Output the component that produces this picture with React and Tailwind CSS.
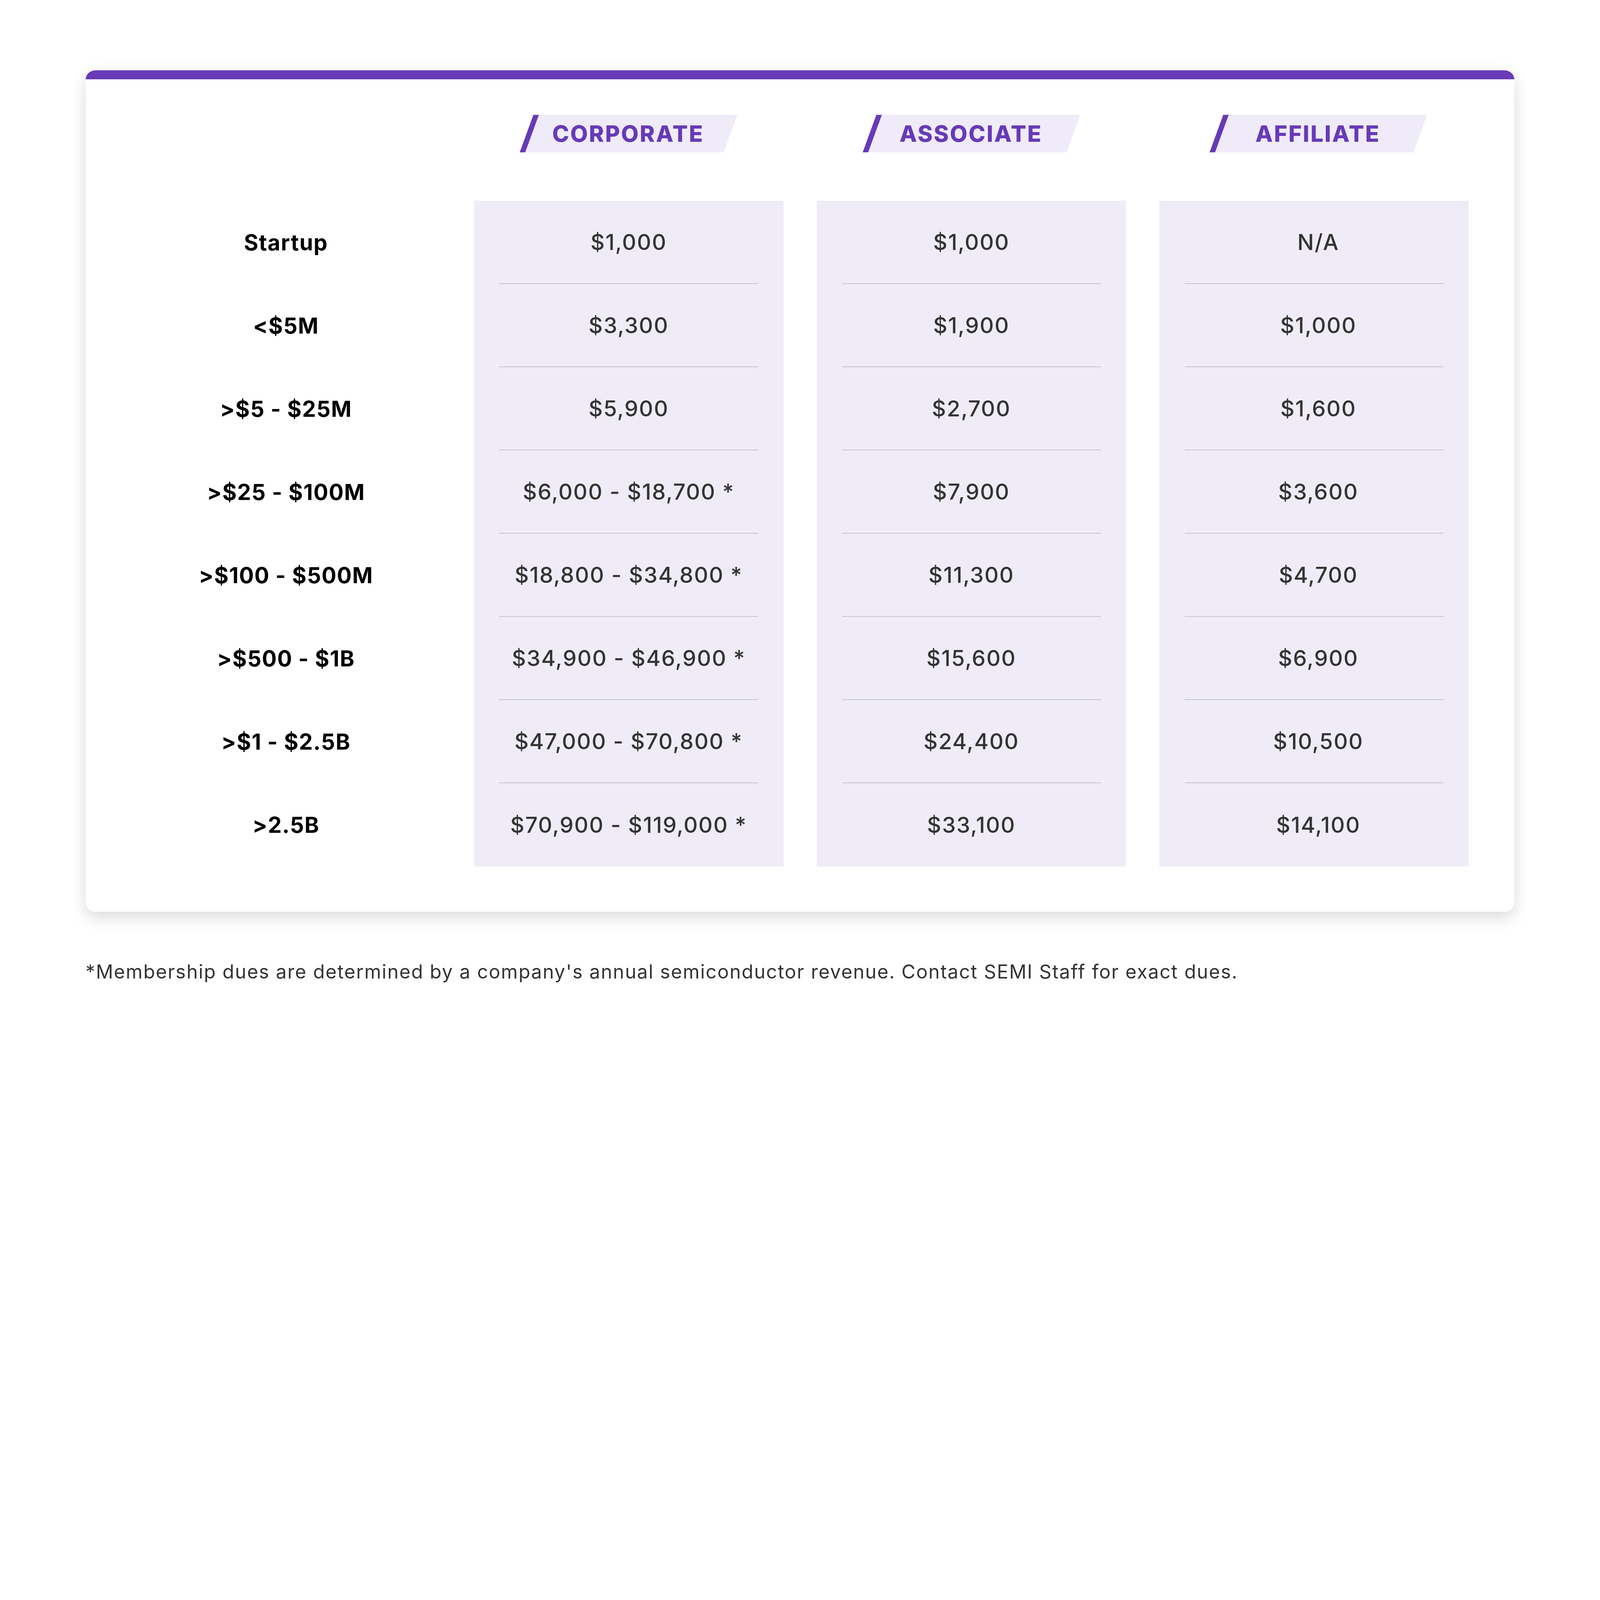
const tiers = [
  { label: "Startup", corporate: "$1,000", associate: "$1,000", affiliate: "N/A" },
  { label: "<$5M", corporate: "$3,300", associate: "$1,900", affiliate: "$1,000" },
  { label: ">$5 - $25M", corporate: "$5,900", associate: "$2,700", affiliate: "$1,600" },
  { label: ">$25 - $100M", corporate: "$6,000 - $18,700 *", associate: "$7,900", affiliate: "$3,600" },
  { label: ">$100 - $500M", corporate: "$18,800 - $34,800 *", associate: "$11,300", affiliate: "$4,700" },
  { label: ">$500 - $1B", corporate: "$34,900 - $46,900 *", associate: "$15,600", affiliate: "$6,900" },
  { label: ">$1 - $2.5B", corporate: "$47,000 - $70,800 *", associate: "$24,400", affiliate: "$10,500" },
  { label: ">2.5B", corporate: "$70,900 - $119,000 *", associate: "$33,100", affiliate: "$14,100" },
];

const columns = [
  { key: "corporate", title: "CORPORATE", shift: "" },
  { key: "associate", title: "ASSOCIATE", shift: "" },
  { key: "affiliate", title: "AFFILIATE", shift: "pl-[22px]" },
];

const Badge = ({ title, shift }) => (
  <div className={`flex justify-center ${shift}`}>
    <div className="flex h-[96px] w-[522px] -skew-x-20 items-center justify-center border-l-[14px] border-[#673ab7] bg-[#efebf9]">
      <span className="-ml-[16px] skew-x-20 text-[58px] font-extrabold tracking-[3px] text-[#673ab7]">
        {title}
      </span>
    </div>
  </div>
);

const App = () => {
  return (
    <div
      className="h-[2696px] overflow-hidden bg-white pt-[180px] text-[#333]"
      style={{ fontFamily: "Inter, 'Noto Sans', sans-serif" }}
    >
      <div className="mx-auto w-[3658px] overflow-hidden rounded-[25px] bg-white shadow-[0_14px_40px_rgba(0,0,0,0.15)]">
        <div className="h-[23px] bg-[#673ab7]" />
        <div className="grid grid-cols-4 gap-x-[85px] px-[117px] pt-[91px] pb-[116px]">
          <div />
          {columns.map((c) => (
            <Badge key={c.key} title={c.title} shift={c.shift} />
          ))}

          <div className="col-span-4 h-[124px]" />

          <div className="flex flex-col">
            {tiers.map((t) => (
              <div
                key={t.label}
                className="flex h-[213px] items-center justify-center text-[56px] font-bold tracking-[1.5px] text-black"
              >
                {t.label}
              </div>
            ))}
          </div>

          {columns.map((c) => (
            <div key={c.key} className="flex flex-col bg-[#efecf8] px-[65px]">
              {tiers.map((t, i) => (
                <div
                  key={t.label}
                  className={`flex h-[213px] items-center justify-center text-[56px] font-medium tracking-[2px] ${c.shift} ${
                    i < tiers.length - 1 ? "border-b-2 border-[#c5c3cc]" : ""
                  }`}
                >
                  {t[c.key]}
                </div>
              ))}
            </div>
          ))}
        </div>
      </div>
      <p className="mx-auto mt-[117px] w-[3658px] text-[49px] tracking-[1.9px] text-[#333]">
        *Membership dues are determined by a company's annual semiconductor revenue. Contact SEMI Staff for exact dues.
      </p>
    </div>
  );
};

export default App;
